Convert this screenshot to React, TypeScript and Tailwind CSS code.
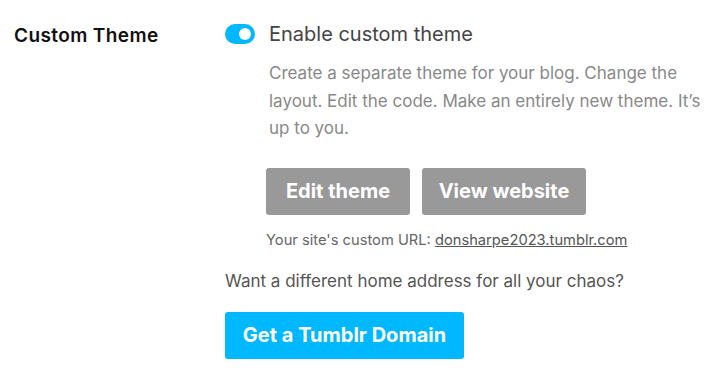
import React from 'react';

export default function App() {
  const [enabled, setEnabled] = React.useState(true);

  return (
    <div className="w-[715px] h-[375px] bg-white overflow-hidden font-['Inter',sans-serif]">
      <div className="flex pt-[22px]">
        <div className="w-[225px] shrink-0 pl-[14px] text-[19px] tracking-[0.4px] font-semibold text-[#111] leading-[28px]">
          Custom Theme
        </div>
        <div className="flex flex-col">
          <label className="flex items-center gap-[14px] h-[22px] mt-[1px]">
            <button
              onClick={() => setEnabled(!enabled)}
              className={`relative w-[30px] h-[20px] rounded-full ${enabled ? 'bg-[#00b8ff]' : 'bg-gray-300'}`}
            >
              <span className={`absolute top-[4px] w-[12px] h-[12px] rounded-full bg-white ${enabled ? 'left-[14px]' : 'left-[4px]'}`} />
            </button>
            <span className="text-[20px] text-[#444] leading-[22px]">Enable custom theme</span>
          </label>

          <div className="pl-[44px] mt-[15px] w-[490px] text-[17px] leading-[27.5px] text-[#888]">
            Create a separate theme for your blog. Change the layout. Edit the code. Make an entirely new theme. It’s up to you.
          </div>

          <div className="pl-[41px] mt-[25px] flex gap-[12px]">
            <button className="h-[47px] w-[144px] rounded-[3px] bg-[#999] text-white text-[20px] font-bold">Edit theme</button>
            <button className="h-[47px] w-[164px] rounded-[3px] bg-[#999] text-white text-[20px] font-bold">View website</button>
          </div>

          <div className="pl-[41px] mt-[15px] text-[14.7px] text-[#666] leading-[20px]">
            Your site's custom URL: <a className="underline text-[#555]">donsharpe2023.tumblr.com</a>
          </div>

          <div className="mt-[19px] text-[17px] text-[#555] leading-[24px]">
            Want a different home address for all your chaos?
          </div>

          <div className="mt-[19px]">
            <button className="h-[47px] w-[239px] rounded-[3px] bg-[#00b8ff] text-white text-[20px] font-bold">Get a Tumblr Domain</button>
          </div>
        </div>
      </div>
    </div>
  );
}
